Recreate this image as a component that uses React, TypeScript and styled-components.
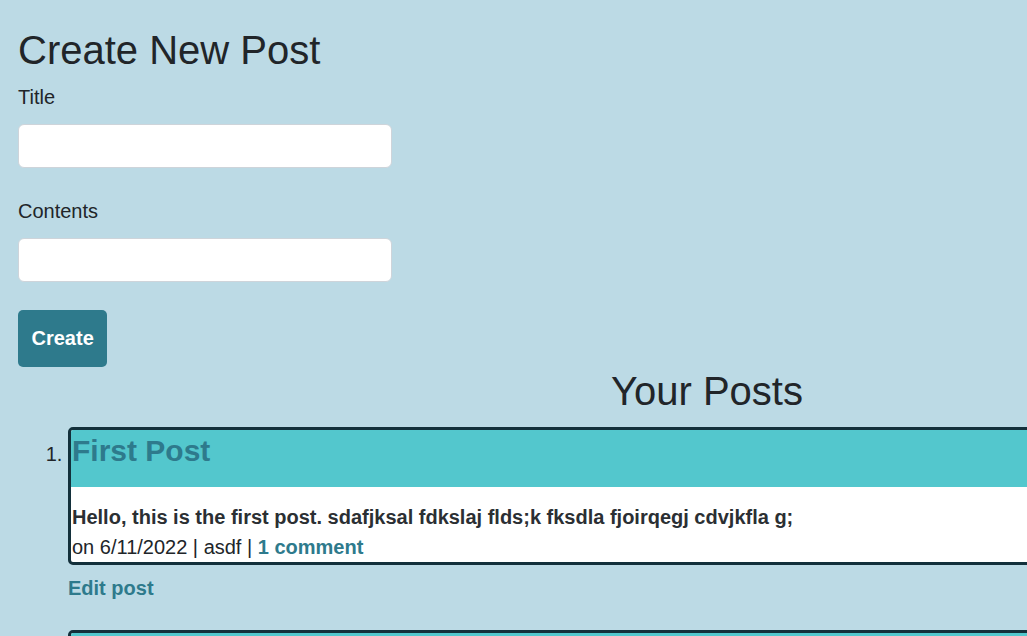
import React from "react";
import styled, { createGlobalStyle } from "styled-components";

const Global = createGlobalStyle`
  html, body {
    margin: 0;
    padding: 0;
    overflow: hidden;
    background: #bcdae5;
  }
  body {
    font-family: "Liberation Sans", Arial, sans-serif;
    font-size: 20px;
    line-height: 1.5;
    color: #212529;
  }
  * { box-sizing: border-box; }
`;

const Page = styled.div`
  width: 1414px;
  padding: 26px 18px 0;
`;

const Heading = styled.h1<{ $center?: boolean }>`
  margin: 0 0 8px;
  font-size: 40px;
  font-weight: 400;
  line-height: 1.2;
  text-align: ${(p) => (p.$center ? "center" : "left")};
`;

const Form = styled.form`
  display: flex;
  flex-direction: column;
  align-items: flex-start;
`;

const Field = styled.div`
  display: flex;
  flex-direction: column;
  margin-bottom: 28px;
`;

const Label = styled.label`
  margin-bottom: 12px;
`;

const Input = styled.input`
  width: 374px;
  height: 44px;
  border: 1px solid #ced4da;
  border-radius: 6px;
  background: #fff;
  padding: 6px 12px;
  font: inherit;
`;

const Button = styled.button`
  background: #2e7a8c;
  color: #fff;
  border: 0;
  border-radius: 5px;
  padding: 13px 13.5px;
  font: inherit;
  font-weight: 700;
  line-height: 31px;
  cursor: pointer;
`;

const List = styled.ol`
  margin: 12px 0 0;
  padding-left: 50px;
`;

const Item = styled.li`
  margin-bottom: 27px;
`;

const Card = styled.div`
  border: 3px solid #13303b;
  border-radius: 5px;
  overflow: hidden;
  background: #fff;
`;

const CardHeader = styled.div`
  background: #53c7cd;
  padding: 3px 1px 18px;
`;

const CardTitle = styled.h2`
  margin: 0;
  font-size: 30px;
  font-weight: 700;
  line-height: 1.2;
  color: #2e7a8c;
`;

const CardBody = styled.div`
  padding: 15px 1px 0;
  color: #2b2f33;
`;

const PostText = styled.p`
  margin: 0;
  font-weight: 700;
`;

const Meta = styled.div`
  color: #212529;
`;

const Link = styled.a`
  color: #2e7a8c;
  font-weight: 700;
  text-decoration: none;
`;

const EditLink = styled(Link)`
  display: inline-block;
  margin-top: 8px;
`;

export default function App() {
  const posts = [
    {
      title: "First Post",
      body: "Hello, this is the first post. sdafjksal fdkslaj flds;k fksdla fjoirqegj cdvjkfla g;",
      date: "6/11/2022",
      author: "asdf",
      comments: "1 comment",
    },
    {
      title: "Second Post",
      body: "Another post.",
      date: "6/11/2022",
      author: "asdf",
      comments: "0 comments",
    },
  ];
  return (
    <>
      <Global />
      <Page>
        <Heading>Create New Post</Heading>
        <Form onSubmit={(e) => e.preventDefault()}>
          <Field>
            <Label htmlFor="title">Title</Label>
            <Input id="title" type="text" />
          </Field>
          <Field>
            <Label htmlFor="contents">Contents</Label>
            <Input id="contents" type="text" />
          </Field>
          <Button type="submit">Create</Button>
        </Form>
        <Heading $center>Your Posts</Heading>
        <List>
          {posts.map((p) => (
            <Item key={p.title}>
              <Card>
                <CardHeader>
                  <CardTitle>{p.title}</CardTitle>
                </CardHeader>
                <CardBody>
                  <PostText>{p.body}</PostText>
                  <Meta>
                    on {p.date} | {p.author} | <Link href="#">{p.comments}</Link>
                  </Meta>
                </CardBody>
              </Card>
              <EditLink href="#">Edit post</EditLink>
            </Item>
          ))}
        </List>
      </Page>
    </>
  );
}
